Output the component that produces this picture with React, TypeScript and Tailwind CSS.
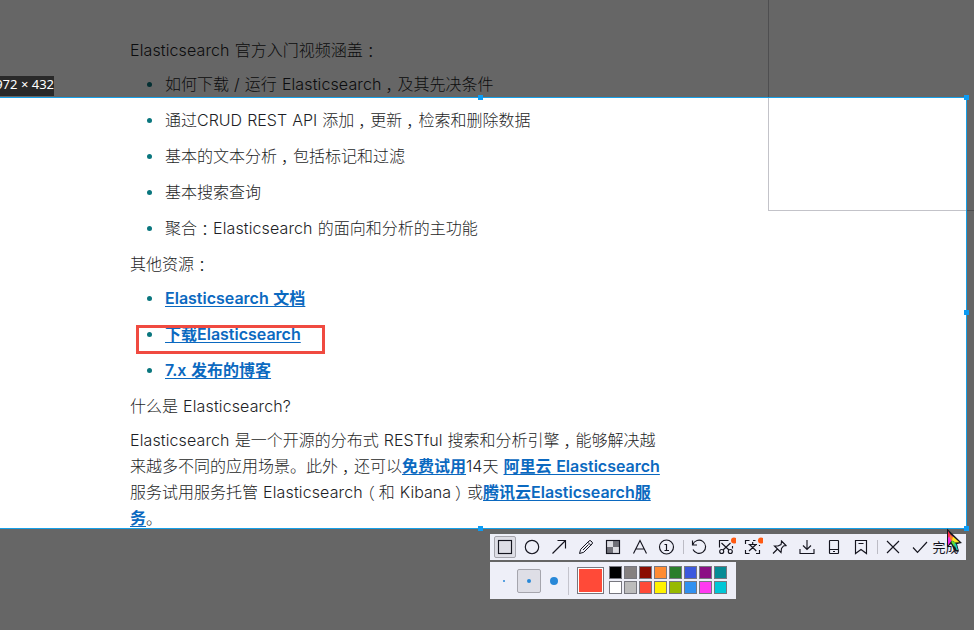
import type { ReactNode } from "react";

const Mark = ({ children }: { children: ReactNode }) => (
  <span className="inline-block h-[26px] w-4 text-center align-top font-['Noto_Sans_CJK_SC',sans-serif] [font-feature-settings:'halt']">
    {children}
  </span>
);

const Es = () => <span className="tracking-[0.12px]">Elasticsearch</span>;

const Link = ({ children }: { children: ReactNode }) => (
  <a className="font-semibold text-[#0b69c0] underline decoration-1 underline-offset-2">{children}</a>
);

const Item = ({ children }: { children: ReactNode }) => (
  <li className="mb-2.5 flex h-[26px] items-center">
    <span className="mt-px mr-[13px] ml-[17px] size-[5px] shrink-0 rounded-full bg-[#0a767e]" />
    <span className="h-[26px]">{children}</span>
  </li>
);

const Tool = ({ children, active }: { children: ReactNode; active?: boolean }) => (
  <div className="flex h-full w-[27px] shrink-0 items-center justify-center">
    <div
      className={
        active
          ? "flex size-[22px] items-center justify-center rounded-[2px] border border-[#a5a5ad] bg-[#dedee6]"
          : "flex size-[22px] items-center justify-center"
      }
    >
      <svg width="20" height="20" viewBox="0 0 20 20" fill="none" stroke="#15151f" strokeWidth="1.15" className="shrink-0">
        {children}
      </svg>
    </div>
  </div>
);

const topColors = ["bg-black", "bg-[#858080]", "bg-[#8b0d00]", "bg-[#ff8b32]", "bg-[#2b7e2b]", "bg-[#3c59dd]", "bg-[#8b0f84]", "bg-[#078b95]"];
const bottomColors = ["bg-white", "bg-[#bcbcbc]", "bg-[#ff4a38]", "bg-[#fff200]", "bg-[#97b900]", "bg-[#3090f0]", "bg-[#ff3af0]", "bg-[#00c7d7]"];

const Swatches = ({ colors }: { colors: string[] }) => (
  <div className="flex gap-0.5">
    {colors.map((c) => (
      <div key={c} className={`size-[13px] border border-[#77777f] ${c}`} />
    ))}
  </div>
);

const Handle = ({ place }: { place: string }) => <div className={`absolute size-[5px] bg-[#0c9cf5] ${place}`} />;

export default function App() {
  return (
    <div className="relative h-[630px] w-[974px] overflow-hidden bg-white">
      <div className="flex">
        <article className="w-[768px] pt-[37px] pl-[130px] font-[Inter,'Noto_Sans_CJK_SC',sans-serif] text-[16px] leading-[26px] font-light whitespace-nowrap text-[#1d1e26] [word-spacing:0.6px]">
          <p className="mb-2 h-[26px]"><Es /> 官方入门视频涵盖<Mark>：</Mark></p>
          <ul>
            <Item>如何下载 / 运行 <Es /><Mark>，</Mark>及其先决条件</Item>
            <Item>通过CRUD REST API 添加<Mark>，</Mark>更新<Mark>，</Mark>检索和删除数据</Item>
            <Item>基本的文本分析<Mark>，</Mark>包括标记和过滤</Item>
            <Item>基本搜索查询</Item>
            <Item>聚合<Mark>：</Mark><Es /> 的面向和分析的主功能</Item>
          </ul>
          <p className="mb-2 h-[26px]">其他资源<Mark>：</Mark></p>
          <ul>
            <Item><Link>Elasticsearch 文档</Link></Item>
            <Item><Link>下载Elasticsearch</Link></Item>
            <Item><Link>7.x 发布的博客</Link></Item>
          </ul>
          <p className="mb-2 h-[26px]">什么是 <Es />?</p>
          <div>
            <p className="h-[26px]"><Es /> 是一个开源的分布式 RESTful 搜索和分析引擎<Mark>，</Mark>能够解决越</p>
            <p className="h-[26px]">来越多不同的应用场景。此外<Mark>，</Mark>还可以<Link>免费试用</Link>14天 <Link>阿里云 Elasticsearch</Link></p>
            <p className="h-[26px]">服务试用服务托管 <Es /><Mark>（</Mark>和 Kibana<Mark>）</Mark>或<Link>腾讯云Elasticsearch服</Link></p>
            <p className="h-[26px]"><Link>务</Link>。</p>
          </div>
        </article>
        <aside className="h-[211px] flex-1 border-b border-l border-[#c3c3c9]" />
      </div>

      <div className="absolute top-[97px] -left-[5px] h-[432px] w-[972px] border border-[#16a0e8] shadow-[0_0_0_1000px_rgba(0,0,0,0.6)]">
        <Handle place="-top-[3px] left-[482px]" />
        <Handle place="-top-[3px] -right-[3px]" />
        <Handle place="top-[212px] -right-[3px]" />
        <Handle place="-bottom-[3px] left-[482px]" />
        <Handle place="-right-[3px] -bottom-[3px]" />
      </div>
      <div className="absolute top-[325px] left-[136px] h-[29px] w-[189px] border-3 border-[#f04a40]" />
      <div className="absolute top-[76px] left-0 flex h-5 w-[54px] items-center justify-end overflow-hidden bg-[#292929] pb-0.5 font-['Noto_Sans',sans-serif] text-[13px] whitespace-nowrap text-white">
        972 × 432
      </div>

      <div className="absolute top-[534px] left-[490px] font-['Noto_Sans_CJK_SC',sans-serif]">
        <div className="flex h-[26px] w-[476px] items-center bg-[#eeeff8] pl-[1.5px]">
          <Tool active><rect x="3.5" y="3.5" width="13" height="13" /></Tool>
          <Tool><circle cx="10" cy="10" r="6.7" /></Tool>
          <Tool><path d="M3.5 16.5 16.5 3.5M8.5 3.5h8v8" /></Tool>
          <Tool><path d="m3.500 16.500 1.200-4.200L13 4q1-1 2 0l1 1q1 1 0 2l-8.300 8.300ZM11.800 5.200l3 3M7 13l5.500-5.500" strokeWidth="1" /></Tool>
          <Tool>
            <path d="M4 4h6v6H4zM10 10h6v6h-6z" fill="#dcdce2" stroke="none" />
            <path d="M10 4h6v6h-6zM4 10h6v6H4z" fill="#707078" stroke="none" />
            <rect x="3.5" y="3.5" width="13" height="13" />
          </Tool>
          <Tool><path d="m3.500 16.500 6.500-13 6.500 13M5.800 12h8.400" /></Tool>
          <Tool>
            <circle cx="9.500" cy="10" r="7" />
            <path d="M7.500 7.500h2v6M7.500 13.500h4.500" />
          </Tool>
          <div className="mr-0.5 ml-[2px] h-3.5 w-px shrink-0 bg-[#bcbcc5]" />
          <Tool><path d="M3.500 3.500V8H8M3.800 7.500A6.600 6.600 0 1 1 4 12.500" /></Tool>
          <Tool>
            <path d="M3.500 10.500v-7h9M16.500 9v2.500M5.500 6l7.500 7M14.500 6 7 13" />
            <circle cx="5.700" cy="14.500" r="2" />
            <circle cx="14.300" cy="14.500" r="2" />
            <circle cx="18" cy="3.500" r="3" fill="#ff5a12" stroke="none" />
          </Tool>
          <Tool>
            <path d="M6.500 3.500h-4V7M2.500 13v3.500h4M13 16.500h3.500V13M16.500 8v1M10 3.500h2.500M5.500 7.500h8.500M9.700 5v2.500M6.500 7.500l6.800 6.500M13 7.500 6 14" />
            <circle cx="18" cy="3.500" r="3" fill="#ff5a12" stroke="none" />
          </Tool>
          <Tool><path d="m11 3.500 5.500 5.500M11.700 4.200 11 7.500 8 9 4.500 9l6.500 6.500.5-4 2-2.500 2.700-.5M7.500 12l-4.500 4.500" /></Tool>
          <Tool><path d="M10 3v9.500M6 8.500l4 4 4-4M3 12v4.500h14V12" /></Tool>
          <Tool><rect x="5.500" y="3.500" width="9" height="13" rx="0.5" /><path d="M5.500 12.500h9M9 14.500h2" /></Tool>
          <Tool><path d="M4.500 3.500h11v13L10 12.500l-5.500 4ZM7.500 6.500h5" /></Tool>
          <div className="mx-[2px] h-3.5 w-px shrink-0 bg-[#bcbcc5]" />
          <Tool><path d="m4 4 12 12M16 4 4 16" /></Tool>
          <Tool><path d="m3 10.500 4.500 5L17 5" /></Tool>
          <span className="-ml-px text-[13px] whitespace-nowrap text-[#15151f]">完成</span>
        </div>
        <div className="mt-0.5 flex h-[37px] w-[246px] items-center bg-[#eeeff8]">
          <div className="flex w-[27px] justify-center"><div className="size-0.5 rounded-full bg-[#2888d8]" /></div>
          <div className="flex size-6 items-center justify-center rounded-[2px] border border-[#a5a5ad] bg-[#dedee6]">
            <div className="size-1 rounded-full bg-[#2888d8]" />
          </div>
          <div className="flex w-[27px] justify-center pr-0.5"><div className="size-2 rounded-full bg-[#2888d8]" /></div>
          <div className="mr-2 h-7 w-px bg-[#c4c4cd]" />
          <div className="mr-[5px] size-[27px] border border-[#77777f] bg-[#ff4a38] ring-1 ring-white ring-inset" />
          <div className="flex flex-col gap-0.5 pb-px">
            <Swatches colors={topColors} />
            <Swatches colors={bottomColors} />
          </div>
        </div>
      </div>

      <svg className="absolute top-[528px] left-[945px]" width="18" height="26" viewBox="0 0 18 26">
        <path d="M2 .5v19l4-3.500 4 7.500h4l-2-7.500 5-1Z" fill="#16181c" />
        <path d="M3 3v7l4-1.500Z" fill="#ff2a4a" />
        <path d="M3 9.500v8L7 12l1-3-1-1.500Z" fill="#f224e8" />
        <path d="m5.500 6.500 4 4.500-3 2-2-3Z" fill="#ff7a2a" />
        <path d="m8 8.500 6.500 5.700-4 .3-3.500-2Z" fill="#ffe61e" />
        <path d="m6.500 12.500 4 2-1 4.500-3-4.500Z" fill="#5ddf35" />
        <path d="m9 16 2-.5 2 6.500h-1.500Z" fill="#19c9b8" />
      </svg>
    </div>
  );
}
